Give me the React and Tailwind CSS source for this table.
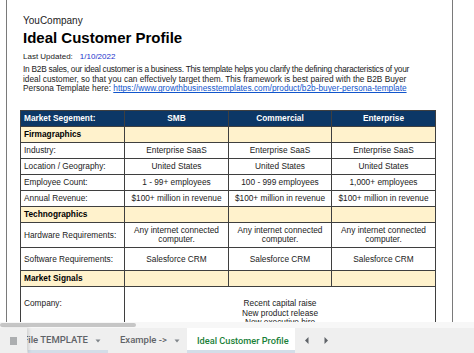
import React from 'react';

const hw = (
  <>
    Any internet connected
    <br />
    computer.
  </>
);

const rows = [
  { type: 'section', label: 'Firmagraphics' },
  { label: 'Industry:', smb: 'Enterprise SaaS', com: 'Enterprise SaaS', ent: 'Enterprise SaaS', h: 'h-[16px]' },
  { label: 'Location / Geography:', smb: 'United States', com: 'United States', ent: 'United States', h: 'h-[16px]' },
  { label: 'Employee Count:', smb: '1 - 99+ employees', com: '100 - 999 employees', ent: '1,000+ employees', h: 'h-[16px]' },
  {
    label: 'Annual Revenue:',
    smb: '$100+ million in revenue',
    com: '$100+ million in revenue',
    ent: '$100+ million in revenue',
    h: 'h-[16px]',
  },
  { type: 'section', label: 'Technographics' },
  { label: 'Hardware Requirements:', smb: hw, com: hw, ent: hw, h: 'h-[25px]' },
  { label: 'Software Requirements:', smb: 'Salesforce CRM', com: 'Salesforce CRM', ent: 'Salesforce CRM', h: 'h-[23px]' },
  { type: 'section', label: 'Market Signals' },
];

const cell = 'border border-[#3f3f3f] p-0';

const Caret = () => (
  <svg width="6" height="4" viewBox="0 0 6 4" className="ml-[7px] shrink-0">
    <path d="M0.5 0.5 L5.5 0.5 L3 3.5 Z" fill="#80868b" />
  </svg>
);

const App = () => {
  return (
    <div className="w-[474px] h-[353px] overflow-hidden bg-white font-['Liberation_Sans',Arial,sans-serif] text-[#222]">
      {/* sheet area */}
      <div className="h-[322px] overflow-hidden pl-[6px]">
        <div className="w-[447px] h-full border-x border-[#7a7a7a] pl-[13px] pt-[15px]">
          <div className="pl-[3px] text-[10px] leading-[12px]">YouCompany</div>
          <div className="pl-[3px] mt-[2px] text-[15px] leading-[18px] font-bold text-black">Ideal Customer Profile</div>
          <div className="pl-[3px] mt-[4.5px] text-[8px] leading-[10px] flex">
            <span>Last Updated:</span>
            <span className="ml-[7px] text-[#2233cc]">1/10/2022</span>
          </div>
          <div className="pl-[3px] mt-[3.75px] text-[8.3px] leading-[9.5px] whitespace-nowrap">
            <div className="tracking-[-0.24px]">
              In B2B sales, our ideal customer is a business. This template helps you clarify the defining characteristics of your
            </div>
            <div>ideal customer, so that you can effectively target them. This framework is best paired with the B2B Buyer</div>
            <div>
              Persona Template here:{' '}
              <span className="text-[#1155cc] underline">
                https://www.growthbusinesstemplates.com/product/b2b-buyer-persona-template
              </span>
            </div>
          </div>

          <table className="mt-[16.25px] border-collapse table-fixed w-[415px] text-[8.3px] leading-[9px]">
            <colgroup>
              <col className="w-[104px]" />
              <col className="w-[104px]" />
              <col className="w-[103px]" />
              <col className="w-[104px]" />
            </colgroup>
            <thead>
              <tr className="h-[16px] bg-[#0c3766] text-white font-bold">
                <td className={`${cell} pl-[3px] text-left`}>Market Segement:</td>
                <td className={`${cell} text-center`}>SMB</td>
                <td className={`${cell} text-center`}>Commercial</td>
                <td className={`${cell} text-center`}>Enterprise</td>
              </tr>
            </thead>
            <tbody>
              {rows.map((r, i) =>
                r.type === 'section' ? (
                  <tr key={i} className="h-[16px] bg-[#fff2cc] font-bold text-black">
                    <td className={`${cell} pl-[3px]`}>{r.label}</td>
                    <td className={cell}></td>
                    <td className={cell}></td>
                    <td className={cell}></td>
                  </tr>
                ) : (
                  <tr key={i} className={r.h}>
                    <td className={`${cell} pl-[3px] whitespace-nowrap`}>{r.label}</td>
                    <td className={`${cell} text-center whitespace-nowrap`}>{r.smb}</td>
                    <td className={`${cell} text-center whitespace-nowrap`}>{r.com}</td>
                    <td className={`${cell} text-center whitespace-nowrap`}>{r.ent}</td>
                  </tr>
                )
              )}
              <tr className="h-[50px]">
                <td className={`${cell} pl-[3px] align-top pt-[12px]`}>Company:</td>
                <td colSpan={3} className={`${cell} align-top text-center pt-[12px] leading-[9.7px]`}>
                  <div>Recent capital raise</div>
                  <div>New product release</div>
                  <div>New executive hire</div>
                </td>
              </tr>
            </tbody>
          </table>
        </div>
      </div>

      {/* scrollbar strip */}
      <div className="h-[6px] bg-[#f7f7f7] flex items-center">
        <div className="h-[4px] w-[136px] rounded-full bg-[#c6c6c6]" />
      </div>

      {/* sheet tabs */}
      <div className="h-[25px] bg-[#efefef] flex font-['Roboto',sans-serif] text-[9.5px] font-medium text-[#5f6368]">
        <div className="relative z-10 w-[27px] shrink-0 h-full bg-[#efefef] flex items-center justify-center shadow-[2px_0_3px_rgba(0,0,0,0.12)]">
          <svg width="7" height="8" viewBox="0 0 7 8">
            <rect x="0" y="0.5" width="7" height="1" fill="#6b6f73" />
            <rect x="0" y="2.5" width="7" height="1" fill="#6b6f73" />
            <rect x="0" y="4.5" width="7" height="1" fill="#6b6f73" />
            <rect x="0" y="6.5" width="7" height="1" fill="#6b6f73" />
          </svg>
        </div>
        <div className="flex-1 overflow-hidden flex">
          <div className="relative -ml-[4px] w-[85px] shrink-0 flex items-center whitespace-nowrap">
            <span>File TEMPLATE</span>
            <Caret />
            <div className="absolute left-[5px] right-0 bottom-0 h-[3px] bg-[#d3dde8]" />
          </div>
          <div className="w-[79px] shrink-0 flex items-center pl-[12px] whitespace-nowrap">
            <span>Example -&gt;</span>
            <Caret />
          </div>
          <div className="relative w-[108px] shrink-0 flex items-center pl-[10px] bg-white text-[#188038] whitespace-nowrap">
            <span className="text-[9.2px]">Ideal Customer Profile</span>
            <div className="absolute left-0 right-0 bottom-0 h-[3px] bg-[#d3dde8]" />
          </div>
          <div className="flex items-center gap-[15px] pl-[10px]">
            <svg width="4" height="7" viewBox="0 0 4 7">
              <path d="M3.5 0 L0 3.5 L3.5 7 Z" fill="#5f6368" />
            </svg>
            <svg width="4" height="7" viewBox="0 0 4 7">
              <path d="M0.5 0 L4 3.5 L0.5 7 Z" fill="#5f6368" />
            </svg>
          </div>
        </div>
      </div>
    </div>
  );
};

export default App;
